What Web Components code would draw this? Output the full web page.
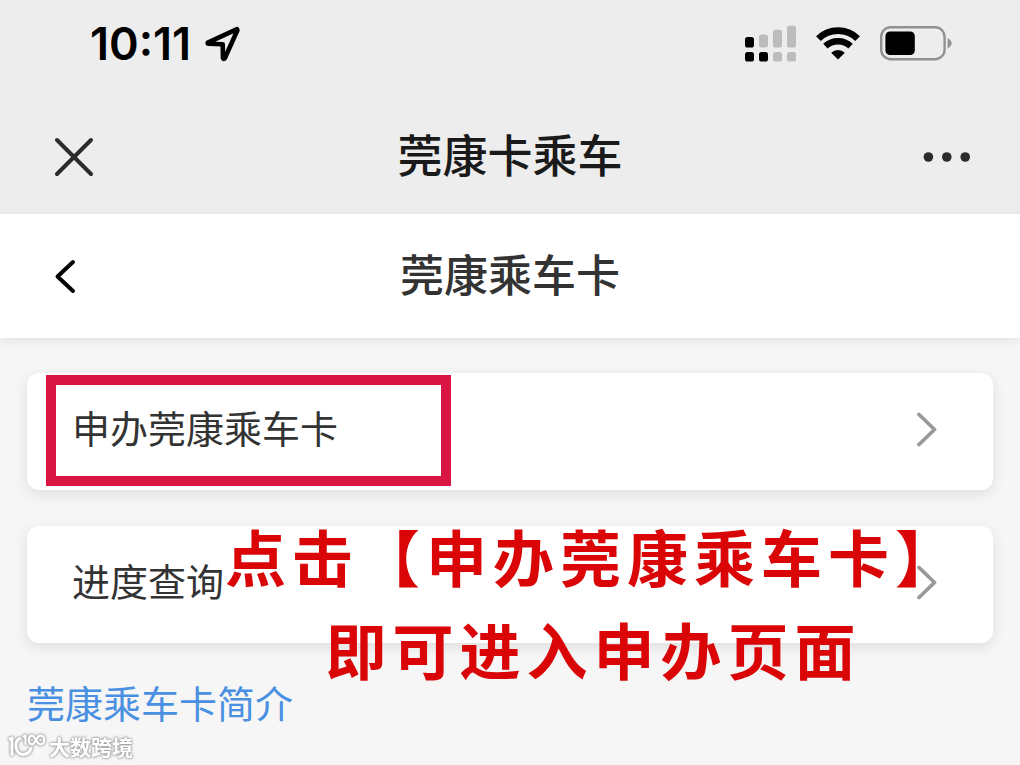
<!DOCTYPE html>
<html lang="zh-CN">
<head>
<meta charset="utf-8">
<meta name="viewport" content="width=device-width, initial-scale=1">
<title>莞康卡乘车</title>
<style>
    body {
        margin: 0;
        min-height: 100vh;
        background: #f6f6f6;
        color: #333333;
        font-family: "Noto Sans CJK SC", "Noto Sans", sans-serif;
    }
</style>
</head>
<body>

<x-app></x-app>

<script>

class XStatus extends HTMLElement {

    #shadow = /*html*/ `
    <style>
        :host {
            display: flex;
            align-items: center;
            justify-content: space-between;
            height: 87px;
            padding: 0 68px 0 90px;
            color: #000000;
            background: #ededed;
            font-family: Inter, "Liberation Sans", sans-serif;
        }
        .left, .right {
            display: flex;
            align-items: center;
        }
        .left { gap: 13px; }
        .right { gap: 20px; }
        time {
            font-size: 45px;
            font-weight: 600;
            line-height: 52px;
        }
        svg { display: block; }
    </style>
    <div class="left">
        <time datetime="10:11"><slot></slot></time>
        <svg width="38" height="38" viewBox="0 0 38 38" fill="none" stroke="#000" stroke-width="4.6" stroke-linejoin="round">
            <path d="M33 4.2 3.8 17.6Q3.4 18.7 4.4 18.8L18.7 19.2 19 33.2Q19.7 34.8 20.8 33.2L33.4 5.2Z"/>
        </svg>
    </div>
    <div class="right">
        <svg width="51" height="37" viewBox="0 0 51 37">
            <g fill="#000">
                <rect x="0" y="12" width="9" height="10.5" rx="2.6"/>
                <rect x="0" y="27" width="9" height="9.6" rx="2.6"/>
                <rect x="14" y="27" width="9" height="9.6" rx="2.6"/>
            </g>
            <g fill="#bcbcbc">
                <rect x="14" y="9.4" width="9" height="13" rx="2.6"/>
                <rect x="28" y="4.7" width="9" height="17.8" rx="2.6"/>
                <rect x="42" y="0.7" width="9" height="21.8" rx="2.6"/>
                <rect x="28" y="27" width="9" height="9.6" rx="2.6"/>
                <rect x="42" y="27" width="9" height="9.6" rx="2.6"/>
            </g>
        </svg>
        <svg width="44" height="33" viewBox="0 0 44 33">
            <g fill="none" stroke="#000">
                <path stroke-width="6.8" d="M2.4 11.6a28.2 28.2 0 0 1 39.2 0"/>
                <path stroke-width="6.4" d="M9.4 19.2a18.4 18.4 0 0 1 25.2 0"/>
            </g>
            <path d="M22 32.6 15.2 25.8a9.8 9.8 0 0 1 13.6 0Z"/>
        </svg>
        <svg width="72" height="35" viewBox="0 0 72 35">
            <rect x="1.2" y="1.2" width="63.4" height="32" rx="9.5" fill="none" stroke="#919191" stroke-width="2.4"/>
            <rect x="5.4" y="5.4" width="29.4" height="23.6" rx="4.6"/>
            <path d="M67.6 12Q71.6 14.2 71.6 17.2T67.6 22.4Z" fill="#919191"/>
        </svg>
    </div>
    `;

    constructor() {
        super();
        this.attachShadow({ mode: 'open' });
        this.shadowRoot.innerHTML = this.#shadow;
    }

}

class XBar extends HTMLElement {

    #shadow = /*html*/ `
    <style>
        :host {
            display: grid;
            grid-template-columns: 1fr auto 1fr;
            align-items: center;
            box-sizing: border-box;
            height: 124px;
            padding: 0 48px;
            background: #ffffff;
            box-shadow: 0 3px 10px rgba(0, 0, 0, 0.08);
        }
        :host([tone=system]) {
            height: 127px;
            padding-top: 12px;
            color: #1a1a1a;
            background: #ededed;
            box-shadow: none;
        }
        h1 {
            grid-column: 2;
            margin: 0;
            padding-bottom: 6px;
            font-size: 44px;
            font-weight: 500;
            line-height: 60px;
        }
        :host([tone=system]) h1 { font-size: 45px; }
        ::slotted([slot=start]) { justify-self: start; }
        ::slotted([slot=end]) { justify-self: end; }
    </style>
    <slot name="start"></slot>
    <h1><slot></slot></h1>
    <slot name="end"></slot>
    `;

    constructor() {
        super();
        this.attachShadow({ mode: 'open' });
        this.shadowRoot.innerHTML = this.#shadow;
    }

}

class XIcon extends HTMLElement {

    #icons = {
        close: '<svg width="52" height="52" viewBox="0 0 52 52" stroke="#2b2b2b"><path d="M9 9 43 43M43 9 9 43"/></svg>',
        back: '<svg width="52" height="52" viewBox="0 0 52 52" stroke="#000"><path d="M25 12 9.5 26.5 25 41"/></svg>',
        more: '<svg width="52" height="52" viewBox="0 0 52 52" fill="#2b2b2b"><circle cx="8.4" cy="26" r="4.8"/><circle cx="26.8" cy="26" r="4.8"/><circle cx="45.2" cy="26" r="4.8"/></svg>'
    };

    #shadow = /*html*/ `
    <style>
        :host { display: block; }
        button {
            display: block;
            padding: 0;
            border: 0;
            cursor: pointer;
            background: none;
        }
        svg {
            display: block;
            stroke-width: 4;
            stroke-linecap: round;
            stroke-linejoin: round;
        }
        path { fill: none; }
    </style>
    `;

    constructor() {
        super();
        this.attachShadow({ mode: 'open' });
        const name = this.getAttribute('name');
        const label = this.getAttribute('label');
        this.shadowRoot.innerHTML = `${this.#shadow}<button type="button" aria-label="${label}">${this.#icons[name]}</button>`;
    }

}

class XCard extends HTMLElement {

    #shadow = /*html*/ `
    <style>
        :host {
            display: block;
            position: relative;
        }
        a {
            display: flex;
            align-items: center;
            justify-content: space-between;
            box-sizing: border-box;
            height: 117px;
            padding: 0 56px 4px 45px;
            color: inherit;
            font-size: 38px;
            line-height: 52px;
            border-radius: 12px;
            background: #ffffff;
            text-decoration: none;
            box-shadow: 0 4px 14px rgba(0, 0, 0, 0.1);
        }
        span { padding-bottom: 5px; }
        svg { display: block; }
        /* frame drawn over the card to point out the entry */
        :host([marked])::after {
            content: "";
            position: absolute;
            top: 2px;
            left: 19px;
            bottom: 4px;
            width: 405px;
            box-sizing: border-box;
            border: 10px solid #d81543;
            pointer-events: none;
        }
    </style>
    <a href="#">
        <span><slot></slot></span>
        <svg width="20" height="36" viewBox="0 0 20 36" fill="none" stroke="#999" stroke-width="3.8" stroke-linecap="round" stroke-linejoin="round">
            <path d="M2 2.5 17.5 17.5 2 32.5"/>
        </svg>
    </a>
    `;

    constructor() {
        super();
        this.attachShadow({ mode: 'open' });
        this.shadowRoot.innerHTML = this.#shadow;
    }

}

class XTip extends HTMLElement {

    #shadow = /*html*/ `
    <style>
        :host {
            display: block;
            position: absolute;
            z-index: 1;
            color: #d90506;
            font-size: 61px;
            font-weight: 700;
            line-height: 93px;
            letter-spacing: 6px;
            text-align: center;
            white-space: nowrap;
            pointer-events: none;
        }
        ::slotted(p) { margin: 0; }
    </style>
    <slot></slot>
    `;

    constructor() {
        super();
        this.attachShadow({ mode: 'open' });
        this.shadowRoot.innerHTML = this.#shadow;
    }

}

class XWatermark extends HTMLElement {

    #shadow = /*html*/ `
    <style>
        :host {
            display: flex;
            align-items: center;
            gap: 3px;
            position: absolute;
            left: 8px;
            bottom: 5px;
            color: #ffffff;
            font-size: 21px;
            font-weight: 700;
            line-height: 28px;
            filter: drop-shadow(0 0 1px #999999) drop-shadow(0 0 1px #aaaaaa);
        }
        svg { display: block; }
    </style>
    <svg width="38" height="26" viewBox="0 0 38 26" fill="none" stroke="#fff" stroke-width="3" stroke-linecap="round" stroke-linejoin="round">
        <path d="M2 6 4 5V21.5"/>
        <path d="M12 5.500C9 6.500 7.800 9.500 7.800 12.500C8 18 11 21.800 15 21.500C19 21.300 21.800 19 22.800 15.500"/>
        <g stroke-width="2.2">
            <path d="M15.500 3.500 17.500 2.500V11"/>
            <path d="M28 7C26.500 4 25.500 2.600 24 2.600C22 2.600 20.800 4.500 20.800 7S22 11.300 24 11.300C25.500 11.300 26.500 10 28 7C29.500 4 31 2.600 32.600 2.600C35 2.600 36.200 4.700 36.200 7S35 11.300 32.600 11.300C31 11.300 29.500 10 28 7Z"/>
        </g>
    </svg>
    <slot></slot>
    `;

    constructor() {
        super();
        this.attachShadow({ mode: 'open' });
        this.shadowRoot.innerHTML = this.#shadow;
    }

}

class XApp extends HTMLElement {

    #shadow = /*html*/ `
    <style>
        :host {
            display: flex;
            flex-direction: column;
            position: relative;
            min-height: 100vh;
        }
        main {
            display: flex;
            flex-direction: column;
            gap: 36px;
            padding: 35px 27px 32px;
            position: relative;
        }
        .intro {
            align-self: flex-start;
            color: #4a90e2;
            font-size: 38px;
            line-height: 46px;
            text-decoration: none;
        }
        x-tip {
            top: 171px;
            left: 225px;
        }
    </style>
    <x-status>10:11</x-status>
    <x-bar tone="system">
        <x-icon slot="start" name="close" label="关闭"></x-icon>
        莞康卡乘车
        <x-icon slot="end" name="more" label="更多"></x-icon>
    </x-bar>
    <x-bar>
        <x-icon slot="start" name="back" label="返回"></x-icon>
        莞康乘车卡
    </x-bar>
    <main>
        <x-card marked>申办莞康乘车卡</x-card>
        <x-card>进度查询</x-card>
        <a class="intro" href="#">莞康乘车卡简介</a>
        <x-tip>
            <p>点击【申办莞康乘车卡】</p>
            <p>即可进入申办页面</p>
        </x-tip>
    </main>
    <x-watermark>大数跨境</x-watermark>
    `;

    constructor() {
        super();
        this.attachShadow({ mode: 'open' });
        this.shadowRoot.innerHTML = this.#shadow;
    }

}

customElements.define('x-status', XStatus);
customElements.define('x-bar', XBar);
customElements.define('x-icon', XIcon);
customElements.define('x-card', XCard);
customElements.define('x-tip', XTip);
customElements.define('x-watermark', XWatermark);
customElements.define('x-app', XApp);

</script>
</body>
</html>
